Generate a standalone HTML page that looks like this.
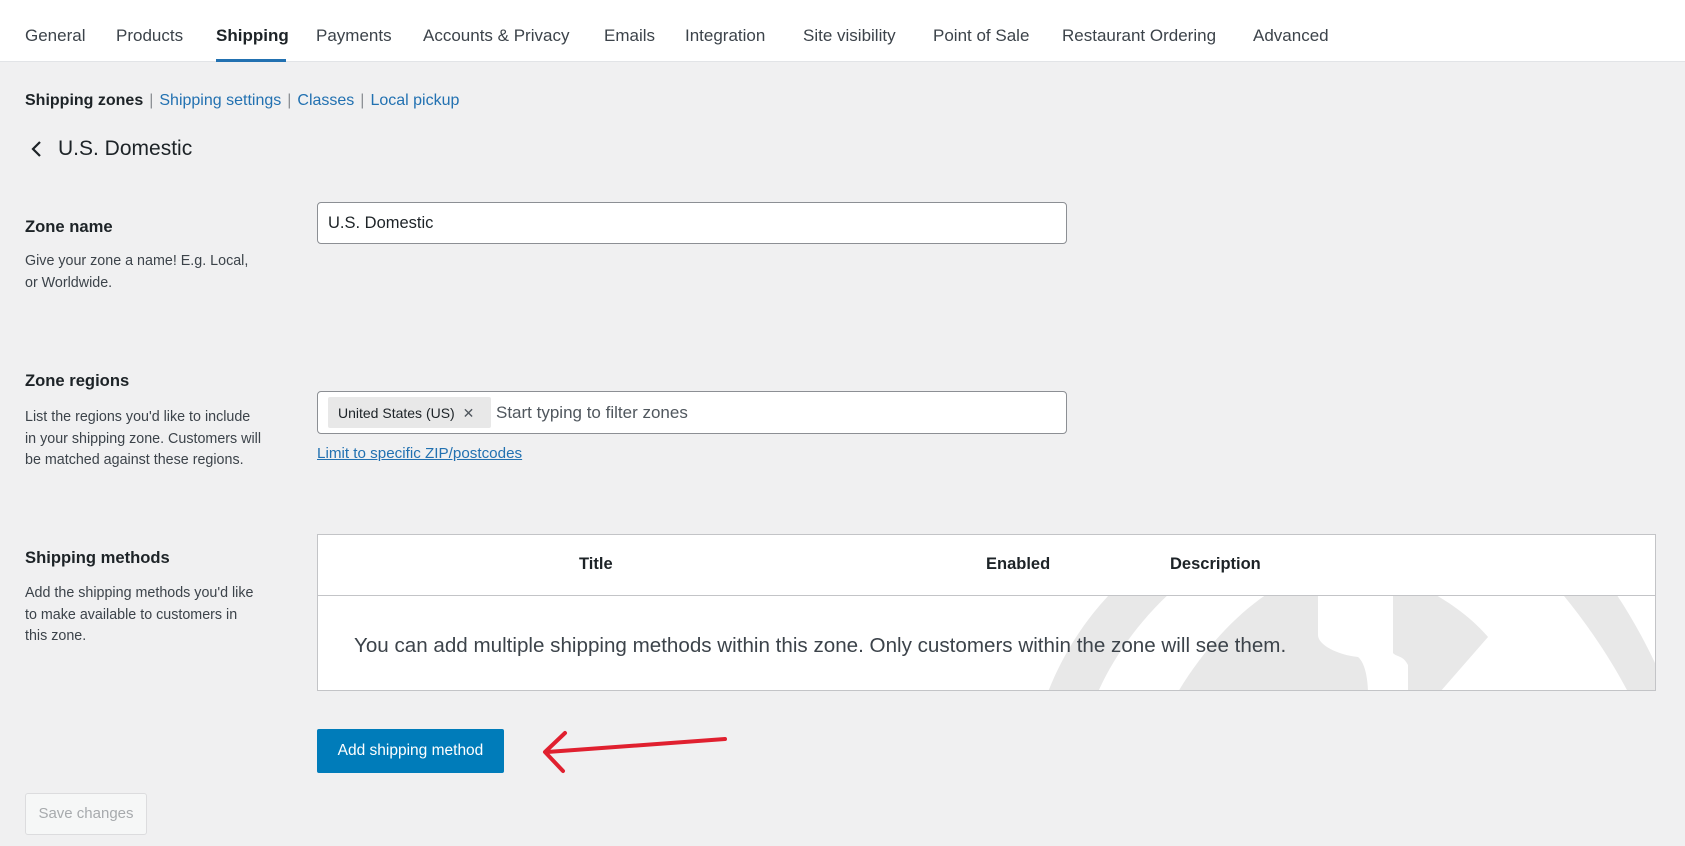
<!DOCTYPE html>
<html><head><meta charset="utf-8"><style>
*{margin:0;padding:0;box-sizing:border-box}
body{width:1685px;height:846px;background:#f0f0f1;font-family:"Liberation Sans",sans-serif;color:#1d2327;position:relative;overflow:hidden}
.abs{position:absolute;white-space:nowrap}
.top{position:absolute;left:0;top:0;width:1685px;height:62px;background:#fff;border-bottom:1px solid #e2e4e7}
.tab{position:absolute;top:26px;font-size:17px;color:#3c434a}
.lbl{font-size:16.6px;font-weight:bold;color:#1d2327}
.desc{font-size:14.3px;color:#3c434a;line-height:21.5px}
.a{color:#2271b1}
.sep{color:#8c8f94;margin:0 6px}
.input{position:absolute;background:#fff;border:1px solid #8c8f94;border-radius:4px}
</style></head><body>
<div class="top">
<span class="tab" style="left:25px">General</span>
<span class="tab" style="left:116px">Products</span>
<span class="tab" style="left:216px;color:#1d2327;font-weight:bold">Shipping</span>
<span class="tab" style="left:316px">Payments</span>
<span class="tab" style="left:423px">Accounts &amp; Privacy</span>
<span class="tab" style="left:604px">Emails</span>
<span class="tab" style="left:685px">Integration</span>
<span class="tab" style="left:803px">Site visibility</span>
<span class="tab" style="left:933px">Point of Sale</span>
<span class="tab" style="left:1062px">Restaurant Ordering</span>
<span class="tab" style="left:1253px">Advanced</span>
<div style="position:absolute;left:216px;top:59px;width:70px;height:3px;background:#2271b1"></div>
</div>
<div class="abs" style="left:25px;top:92px;font-size:16px"><b>Shipping zones</b><span class="sep">|</span><span class="a">Shipping settings</span><span class="sep">|</span><span class="a">Classes</span><span class="sep">|</span><span class="a">Local pickup</span></div>
<svg class="abs" style="left:30px;top:140px" width="14" height="18"><path d="M10 2 L3 9 L10 16" stroke="#1d2327" stroke-width="2.2" fill="none"/></svg>
<div class="abs" style="left:58px;top:137px;font-size:21px">U.S. Domestic</div>

<div class="abs lbl" style="left:25px;top:217px">Zone name</div>
<div class="abs desc" style="left:25px;top:251px">Give your zone a name! E.g. Local,<br>or Worldwide.</div>
<div class="input" style="left:317px;top:202px;width:750px;height:42px"><span class="abs" style="left:10px;top:11px;font-size:16.5px">U.S. Domestic</span></div>

<div class="abs lbl" style="left:25px;top:371px">Zone regions</div>
<div class="abs desc" style="left:25px;top:407px">List the regions you'd like to include<br>in your shipping zone. Customers will<br>be matched against these regions.</div>
<div class="input" style="left:317px;top:391px;width:750px;height:43px">
<div class="abs" style="left:10px;top:5px;width:163px;height:31px;background:#e8e8e8;border-radius:2px;font-size:14px;padding:8px 0 0 10px;color:#1d2327">United States (US) <span style="color:#50575e;margin-left:4px">✕</span></div>
<span class="abs" style="left:178px;top:11px;font-size:17px;color:#50575e">Start typing to filter zones</span></div>
<div class="abs a" style="left:317px;top:445px;font-size:15.2px;text-decoration:underline">Limit to specific ZIP/postcodes</div>

<div class="abs lbl" style="left:25px;top:548px">Shipping methods</div>
<div class="abs desc" style="left:25px;top:583px">Add the shipping methods you'd like<br>to make available to customers in<br>this zone.</div>

<div class="abs" style="left:317px;top:534px;width:1339px;height:157px;background:#fff;border:1px solid #c3c4c7;overflow:hidden">
<svg class="abs" style="left:0;top:60px" width="1339" height="97"><g fill="#e8e8e8">
<path d="M730 97 C760 20 820 -40 880 -60 L940 -60 C870 -30 810 30 780 97 Z"/>
<path d="M860 97 C900 30 960 -20 1000 -20 L1000 40 C1000 50 1020 60 1040 62 C1050 70 1050 97 1050 97 Z"/>
<path d="M1090 97 L1090 70 C1085 60 1078 62 1075 58 L1075 -20 C1130 0 1160 30 1170 42 L1122 97 Z"/>
<path d="M1250 -60 C1300 -10 1330 50 1350 97 L1310 97 C1280 40 1240 -10 1200 -50 Z"/>
</g></svg>
<div class="abs" style="left:0;top:0;width:100%;height:61px;border-bottom:1px solid #c3c4c7;background:#fff"></div>
<span class="abs" style="left:261px;top:20px;font-size:16.5px;font-weight:bold">Title</span>
<span class="abs" style="left:668px;top:20px;font-size:16.5px;font-weight:bold">Enabled</span>
<span class="abs" style="left:852px;top:20px;font-size:16.5px;font-weight:bold">Description</span>
<span class="abs" style="left:36px;top:99px;font-size:20.6px;color:#3c434a">You can add multiple shipping methods within this zone. Only customers within the zone will see them.</span>
</div>

<div class="abs" style="left:317px;top:729px;width:187px;height:44px;background:#007cba;border-radius:2px;color:#fff;font-size:15.5px;text-align:center;line-height:44px">Add shipping method</div>
<svg class="abs" style="left:535px;top:725px" width="200" height="50"><path d="M190 14 L12 27 M30 8 L10 27 L28 46" stroke="#e0202f" stroke-width="4" fill="none" stroke-linecap="round" stroke-linejoin="round"/></svg>

<div class="abs" style="left:25px;top:793px;width:122px;height:42px;border:1px solid #dcdcde;border-radius:3px;background:#f6f7f7;color:#a7aaad;font-size:15px;text-align:center;line-height:40px">Save changes</div>
</body></html>
